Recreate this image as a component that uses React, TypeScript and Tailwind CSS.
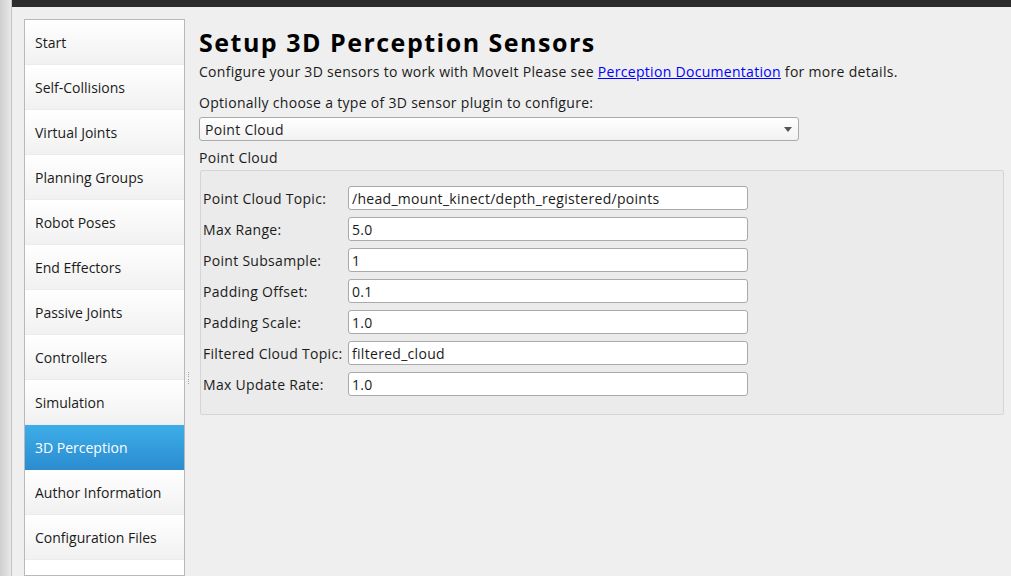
import React from "react";

const steps: string[] = [
  "Start",
  "Self-Collisions",
  "Virtual Joints",
  "Planning Groups",
  "Robot Poses",
  "End Effectors",
  "Passive Joints",
  "Controllers",
  "Simulation",
  "3D Perception",
  "Author Information",
  "Configuration Files",
];

interface fieldProps {
  label: string;
  value: string;
}

const fields: fieldProps[] = [
  { label: "Point Cloud Topic:", value: "/head_mount_kinect/depth_registered/points" },
  { label: "Max Range:", value: "5.0" },
  { label: "Point Subsample:", value: "1" },
  { label: "Padding Offset:", value: "0.1" },
  { label: "Padding Scale:", value: "1.0" },
  { label: "Filtered Cloud Topic:", value: "filtered_cloud" },
  { label: "Max Update Rate:", value: "1.0" },
];

export default function App() {
  return (
    <div
      className="flex h-[576px] w-[1011px] overflow-hidden bg-[#efefef] text-[14px] text-[#1b1b1b]"
      style={{ fontFamily: '"Open Sans", "Noto Sans", sans-serif' }}
    >
      {/* window edge */}
      <div className="w-[12px] shrink-0 border-r border-[#c4c4c4] bg-gradient-to-r from-[#cfcfcf] to-[#e8e8e8]" />

      <div className="flex flex-1 flex-col">
        <div className="h-[7px] shrink-0 bg-[#2c2c2c]" />

        <div className="flex flex-1 pl-[12px] pt-[12px]">
          {/* STEPS */}
          <div className="flex w-[161px] shrink-0 flex-col border border-[#b9b9b9] bg-white">
            {steps.map((s, i) => {
              const active = s === "3D Perception";
              return (
                <div
                  key={i}
                  className={
                    active
                      ? "flex h-[45px] items-center bg-gradient-to-b from-[#3daee9] to-[#2b8ccf] pl-[10px] text-white"
                      : "flex h-[45px] items-center border-b border-[#ececec] bg-gradient-to-b from-white to-[#f1f1f1] pl-[10px]"
                  }
                >
                  {s}
                </div>
              );
            })}
          </div>

          {/* splitter */}
          <div className="flex w-[14px] shrink-0 justify-center pt-[353px]">
            <div className="ml-[-8px] flex h-[12px] flex-col justify-between">
              {[0, 1, 2, 3, 4, 5].map((d) => (
                <div key={d} className="h-px w-px bg-[#a8a8a8]" />
              ))}
            </div>
          </div>

          {/* CONTENT */}
          <div className="flex flex-1 flex-col pr-[7px] tracking-[0.3px]">
            <h1 className="mt-[8px] h-[30px] text-[25px] font-bold leading-[30px] tracking-[1.5px] text-black">
              Setup 3D Perception Sensors
            </h1>
            <p className="mt-[5px] h-[20px] leading-[20px]">
              Configure your 3D sensors to work with MoveIt Please see{" "}
              <a className="text-[#0000ff] underline">Perception Documentation</a> for more details.
            </p>
            <p className="mt-[11px] h-[20px] leading-[20px]">
              Optionally choose a type of 3D sensor plugin to configure:
            </p>

            <div className="mt-[4px] flex h-[24px] w-[600px] items-center justify-between rounded-[3px] border border-[#ababab] bg-gradient-to-b from-white to-[#f2f2f2] pl-[5px] pr-[6px]">
              <span>Point Cloud</span>
              <svg width="8" height="5" viewBox="0 0 8 5">
                <path d="M0 0h8L4 5z" fill="#555" />
              </svg>
            </div>

            <p className="mt-[7px] h-[20px] leading-[20px]">Point Cloud</p>

            <div className="ml-px mt-[2px] flex flex-col gap-[7px] rounded-[2px] border border-[#d5d5d5] bg-[#ebebeb] pb-[18px] pl-[1px] pt-[15px]">
              {fields.map((f, i) => (
                <div key={i} className="flex h-[24px] items-center">
                  <span className="w-[146px] shrink-0 pl-px">{f.label}</span>
                  <div className="flex h-[24px] w-[400px] items-center rounded-[3px] border border-[#a9a9a9] bg-white pl-[3px]">
                    {f.value}
                  </div>
                </div>
              ))}
            </div>
          </div>
        </div>
      </div>
    </div>
  );
}
